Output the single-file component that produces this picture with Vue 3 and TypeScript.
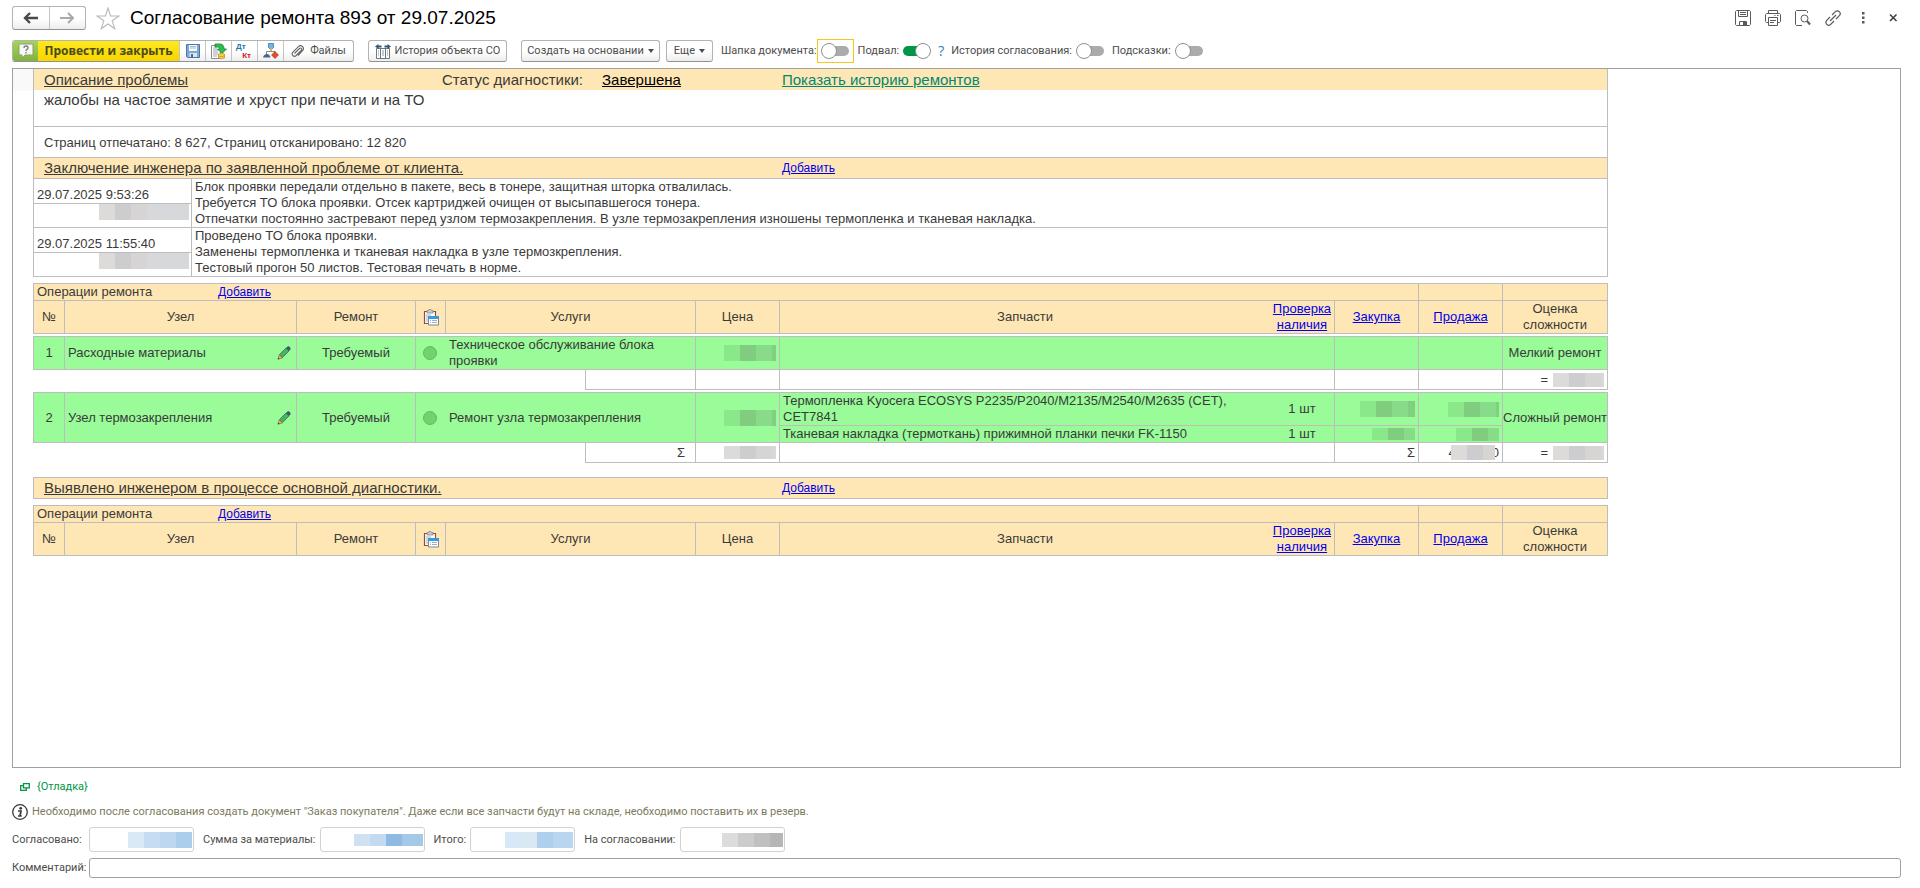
<script setup lang="ts">
import { ref } from 'vue'

interface Mask { width: number; height: number; tone: string }
interface Part { name: string; qty: string; buy: Mask | null; sale: Mask | null; tall: boolean }
interface Operation {
  no: number
  node: string
  repair: string
  service: string
  price: Mask
  parts: Part[]
  grade: string
  total: boolean
}
interface Block { id: string; operations: Operation[] }

const green = (width: number, height: number): Mask => ({ width, height, tone: 'mask-green' })
const gray = (width: number, height: number): Mask => ({ width, height, tone: 'mask-gray' })
const box = (m: Mask) => ({ width: m.width + 'px', height: m.height + 'px' })

const notes = [
  {
    date: '29.07.2025 9:53:26',
    lines: [
      'Блок проявки передали отдельно в пакете, весь в тонере, защитная шторка отвалилась.',
      'Требуется ТО блока проявки. Отсек картриджей очищен от высыпавшегося тонера.',
      'Отпечатки постоянно застревают перед узлом термозакрепления. В узле термозакрепления изношены термопленка и тканевая накладка.',
    ],
  },
  {
    date: '29.07.2025 11:55:40',
    lines: [
      'Проведено ТО блока проявки.',
      'Заменены термопленка и тканевая накладка в узле термозкрепления.',
      'Тестовый прогон 50 листов. Тестовая печать в норме.',
    ],
  },
]

const blocks: Block[] = [
  {
    id: 'declared',
    operations: [
      {
        no: 1,
        node: 'Расходные материалы',
        repair: 'Требуемый',
        service: 'Техническое обслуживание блока проявки',
        price: green(52, 16),
        parts: [{ name: '', qty: '', buy: null, sale: null, tall: true }],
        grade: 'Мелкий ремонт',
        total: false,
      },
      {
        no: 2,
        node: 'Узел термозакрепления',
        repair: 'Требуемый',
        service: 'Ремонт узла термозакрепления',
        price: green(52, 16),
        parts: [
          {
            name: 'Термопленка Kyocera ECOSYS P2235/P2040/M2135/M2540/M2635 (CET), CET7841',
            qty: '1 шт',
            buy: green(55, 16),
            sale: green(51, 15),
            tall: true,
          },
          {
            name: 'Тканевая накладка (термоткань) прижимной планки печки FK-1150',
            qty: '1 шт',
            buy: green(43, 12),
            sale: green(43, 13),
            tall: false,
          },
        ],
        grade: 'Сложный ремонт',
        total: true,
      },
    ],
  },
  { id: 'found', operations: [] },
]

const sums = [
  { id: 'agreed', label: 'Согласовано:', mask: { width: 64, height: 16, tone: 'mask-blue' } },
  { id: 'materials', label: 'Сумма за материалы:', mask: { width: 69, height: 12, tone: 'mask-deep' } },
  { id: 'total', label: 'Итого:', mask: { width: 68, height: 16, tone: 'mask-sky' } },
  { id: 'pending', label: 'На согласовании:', mask: { width: 61, height: 14, tone: 'mask-dark' } },
]

const showHeader = ref(false)
const showFooter = ref(true)
const showHistory = ref(false)
const showHints = ref(false)
const comment = ref('')
</script>

<template>
  <main class="page">
    <header class="titlebar">
      <div class="group nav">
        <button type="button" aria-label="Назад">
          <svg width="16" height="12" viewBox="0 0 16 12"><path d="M7 1 2 6l5 5M2 6h13" fill="none" stroke="#4a4a4a" stroke-width="2.4" /></svg>
        </button>
        <button type="button" aria-label="Вперед">
          <svg width="16" height="12" viewBox="0 0 16 12"><path d="M9 1l5 5-5 5M14 6H1" fill="none" stroke="#a8a8a8" stroke-width="2" /></svg>
        </button>
      </div>
      <button type="button" class="bare star" aria-label="В избранное">
        <svg width="24" height="23" viewBox="0 0 24 23"><path d="M12 1l2.500 8H23l-6.800 4.800 2.600 8L12 17l-6.800 4.800 2.600-8L1 9h8.500z" fill="#fff" stroke="#b4b9be" stroke-width="1.1" /></svg>
      </button>
      <h1>Согласование ремонта 893 от 29.07.2025</h1>
      <div class="window-tools">
        <button type="button" class="bare" aria-label="Сохранить">
          <svg width="16" height="16" viewBox="0 0 16 16" fill="none" stroke="#5a5a5a"><path d="M1.500.5h13l1 1v13l-1 1h-13l-1-1v-13z" /><path d="M3.500.5v6h9v-6M5 2.500h6M5 4.500h6M4.500 15.500v-4h7v4" /><path d="M8 12h3v3H8z" fill="#5a5a5a" stroke="none" /></svg>
        </button>
        <button type="button" class="bare" aria-label="Печать">
          <svg width="16" height="16" viewBox="0 0 16 16" fill="none" stroke="#5a5a5a"><path d="M3.500 3.500v-3h9v3M3 12.500H1.500l-1-1v-7l1-1h13l1 1v7l-1 1H13" /><path d="M3.500 7.500h9v8h-9zM5 10.500h6M5 12.500h4M9.500 5.500h1M12 5.500h1.500" /></svg>
        </button>
        <button type="button" class="bare" aria-label="Просмотр">
          <svg width="16" height="16" viewBox="0 0 16 16" fill="none" stroke="#5a5a5a"><path d="M12.500 3V1.500l-1-1h-10l-1 1v13l1 1H7" /><circle cx="9.500" cy="8.500" r="3.500" /><path d="M12 11l3 3.500" stroke-width="2" /></svg>
        </button>
        <button type="button" class="bare" aria-label="Ссылка">
          <svg width="16" height="16" viewBox="0 0 16 16" fill="none" stroke="#5a5a5a" stroke-width="1.200"><path d="M7 5l3.300-3.300a2.700 2.700 0 0 1 4 4L11 9M9 11l-3.300 3.300a2.700 2.700 0 0 1-4-4L5 7M5 11l6-6" /></svg>
        </button>
        <button type="button" class="bare" aria-label="Дополнительно">
          <svg width="16" height="16" viewBox="0 0 16 16" fill="#5a5a5a"><path d="M7 2h2.500v2.500H7zM7 6.500h2.500V9H7zM7 11h2.500v2.500H7z" /></svg>
        </button>
        <button type="button" class="bare" aria-label="Закрыть">
          <svg width="16" height="16" viewBox="0 0 16 16"><path d="M5 4.500l6.500 6.500M11.500 4.500L5 11" stroke="#3c3c3c" stroke-width="1.500" /></svg>
        </button>
      </div>
    </header>

    <div class="toolbar">
      <div class="group actions">
        <button type="button" class="help" aria-label="Справка">
          <svg width="16" height="16" viewBox="0 0 16 16"><path d="M2.500 1h11Q15 1 15 2.500v8q0 1.500-1.500 1.500H7l-3 3v-3H2.500Q1 12 1 10.500v-8Q1 1 2.500 1z" fill="#f6f8f2" stroke="#8c9c78" /><path d="M6 5q0-2 2-2t2 1.800q0 1-1 1.600T8 8M8 9v1.500" fill="none" stroke="#7b7b7b" stroke-width="1.300" /></svg>
        </button>
        <button type="button" class="primary">Провести и закрыть</button>
        <button type="button" class="icon" aria-label="Записать">
          <svg width="16" height="16" viewBox="0 0 16 16"><path d="M1.500 1.500h13v13h-12l-1-1z" fill="#7fa9d2" stroke="#4b76a5" /><path d="M4 2h8v6H4z" fill="#f5f9fc" /><path d="M5 3.500h6M5 5h6" stroke="#a8bccd" /><path d="M4.500 10h7.500v4H4.500z" fill="#dce7f1" /><path d="M6 11h2v3H6z" fill="#3f6c9c" /></svg>
        </button>
        <button type="button" class="icon" aria-label="Провести">
          <svg width="17" height="17" viewBox="0 0 17 17"><path d="M1.500 2.500h9v13h-9z" fill="#fff" stroke="#8b8b8b" /><path d="M3 5h4M3 7h5M3 9h5M3 11h5M3 13h4" stroke="#9aa6b2" /><path d="M5 1h5q4 0 4 5h2.500L12 10.500 7.500 6H10q0-2-2-2H5z" fill="#2fbf4f" stroke="#158034" stroke-width=".8" /><path d="M8.500 11q3-1.500 6 0v4q-3 1.500-6 0z" fill="#f5cf55" stroke="#c9962a" stroke-width=".8" /><path d="M8.500 13q3 1.500 6 0" fill="none" stroke="#c9962a" stroke-width=".8" /></svg>
        </button>
        <button type="button" class="icon dtkt" aria-label="Проводки"><span class="dt">Дт</span><span class="kt">Кт</span></button>
        <button type="button" class="icon" aria-label="Структура">
          <svg width="16" height="16" viewBox="0 0 16 16"><path d="M8 6v3M3.500 11V8.500h8.500V11" fill="none" stroke="#888" /><path d="M5.500.5h5v4L8 7 5.500 4.500z" fill="#70b4e8" stroke="#3e77a8" stroke-width=".8" /><path d="M6.500 5.500h3L8 8z" fill="#f0b94a" /><path d="M0 14.500q.5-3 3.500-3.500t4 3.500z" fill="#44678f" /><path d="M12 8.500l3.500 3.500-3.500 3.500L8.500 12z" fill="#dd4c2c" stroke="#a93218" stroke-width=".6" /></svg>
        </button>
        <button type="button" class="files">
          <svg width="14" height="14" viewBox="0 0 14 14"><path d="M3.500 9.500l5-5q1.300-1 2 0t-.3 2l-5 5q-1.600 1.500-3.200.2t-.3-3.300l5.700-5.700q2-1.900 4-.2t.3 4L7 11.500" fill="none" stroke="#666" stroke-width="1.100" /></svg>
          Файлы
        </button>
      </div>
      <button type="button" class="btn history">
        <svg width="16" height="15" viewBox="0 0 16 15"><path d="M1.500 4.500h13v10h-13z" fill="#fff" stroke="#6c7780" /><path d="M5.500 5v9M10.500 5v9" stroke="#6c7780" /><path d="M3 7h1M3 9h1M3 11h1M7 7h2M7 9h2M7 11h2M12 7h1M12 9h1M12 11h1" stroke="#8c9aa4" /><path d="M0 2.500L3.500 0v1.500h3v2h-3V5zM16 2.500L12.500 0v1.500h-3v2h3V5z" fill="#33566e" /></svg>
        История объекта СО
      </button>
      <button type="button" class="btn create">Создать на основании<i class="caret"></i></button>
      <button type="button" class="btn more">Еще<i class="caret"></i></button>

      <div class="switches">
        <label for="sw-header">Шапка документа:</label>
        <span class="focus"><input id="sw-header" v-model="showHeader" type="checkbox" class="switch" /></span>
        <label for="sw-footer" class="after-focus">Подвал:</label>
        <input id="sw-footer" v-model="showFooter" type="checkbox" class="switch" />
        <button type="button" class="bare question">?</button>
        <label for="sw-history">История согласования:</label>
        <input id="sw-history" v-model="showHistory" type="checkbox" class="switch" />
        <label for="sw-hints" class="after-switch">Подсказки:</label>
        <input id="sw-hints" v-model="showHints" type="checkbox" class="switch" />
      </div>
    </div>

    <section class="panel">
      <div class="gutter"></div>
      <div class="sheet">
        <div class="band first">
          <h2>Описание проблемы</h2>
          <span class="status">Статус диагностики:</span>
          <a href="#" class="done">Завершена</a>
          <a href="#" class="repairs">Показать историю ремонтов</a>
        </div>
        <p class="problem">жалобы на частое замятие и хруст при печати и на ТО</p>
        <p class="pages">Страниц отпечатано: 8 627, Страниц отсканировано: 12 820</p>
        <div class="band closing">
          <h2>Заключение инженера по заявленной проблеме от клиента.</h2>
          <a href="#" class="add">Добавить</a>
        </div>
        <div v-for="note in notes" :key="note.date" class="note">
          <div class="who">
            <time>{{ note.date }}</time>
            <div class="author"><span class="mask mask-gray author-mask"></span></div>
          </div>
          <div class="text"><p v-for="line in note.lines" :key="line">{{ line }}</p></div>
        </div>

        <template v-for="(block, index) in blocks" :key="block.id">
          <div v-if="index === 1" class="band separate">
            <h2>Выявлено инженером в процессе основной диагностики.</h2>
            <a href="#" class="add">Добавить</a>
          </div>
          <table class="ops">
            <colgroup>
              <col class="c-no" /><col class="c-node" /><col class="c-repair" /><col class="c-flag" />
              <col class="c-serv" /><col class="c-sum" /><col class="c-money" /><col />
              <col class="c-check" /><col class="c-money" /><col class="c-money" /><col class="c-grade" />
            </colgroup>
            <thead>
              <tr class="caption">
                <td colspan="10" class="lead top">
                  <div class="caption-row"><span>Операции ремонта</span><a href="#" class="add">Добавить</a></div>
                </td>
                <td class="top"></td>
                <td class="top"></td>
              </tr>
              <tr class="heads">
                <th class="lead">№</th>
                <th>Узел</th>
                <th>Ремонт</th>
                <th>
                  <svg width="16" height="17" viewBox="0 0 16 17"><path d="M1.500 2.500h11v12h-11z" fill="#fff" stroke="#9a4a35" stroke-width="1.200" /><path d="M4 1.500h1.500L6 .5h2l.5 1H10V4H4z" fill="#c6cbd0" stroke="#808890" stroke-width=".8" /><path d="M3 6h5M3 8h3M3 10h2M3 12h2" stroke="#a8afb6" /><path d="M5.500 7.500h10v8.500h-10z" fill="#fff" stroke="#7a8794" /><path d="M5 7h11v3H5z" fill="#3a9ae0" /><path d="M7 11.500h1M9 11.500h5M7 13.500h1M9 13.500h5" stroke="#9fb0bf" /></svg>
                </th>
                <th colspan="2">Услуги</th>
                <th>Цена</th>
                <th class="open">Запчасти</th>
                <th><a href="#">Проверка наличия</a></th>
                <th><a href="#">Закупка</a></th>
                <th><a href="#">Продажа</a></th>
                <th>Оценка сложности</th>
              </tr>
            </thead>
            <tbody v-for="op in block.operations" :key="op.no">
              <tr class="spacer"><td colspan="12"></td></tr>
              <tr v-for="(part, i) in op.parts" :key="i" class="work" :class="part.tall ? 'tall' : 'short'">
                <template v-if="i === 0">
                  <td :rowspan="op.parts.length" class="lead center">{{ op.no }}</td>
                  <td :rowspan="op.parts.length">
                    <div class="node">
                      <span>{{ op.node }}</span>
                      <button type="button" class="bare" aria-label="Изменить">
                        <svg width="14" height="14" viewBox="0 0 14 14"><path d="M1 13l1.300-4.300L5.500 12z" fill="#f2b45c" stroke="#8d6a3a" stroke-width=".7" /><path d="M.7 13.500l.6-2 1.400 1.400z" fill="#444" /><path d="M2.500 8.500L9 2l3 3-6.500 6.500z" fill="#49b067" stroke="#35784a" stroke-width=".8" /><path d="M9 2l1.500-1.500q1.500-.5 2.300.5t.6 2.300L12 5z" fill="#3f5669" /></svg>
                      </button>
                    </div>
                  </td>
                  <td :rowspan="op.parts.length" class="center">{{ op.repair }}</td>
                  <td :rowspan="op.parts.length" class="open flag"><i class="dot"></i></td>
                  <td :rowspan="op.parts.length" colspan="2">{{ op.service }}</td>
                  <td :rowspan="op.parts.length" class="right"><span class="mask" :class="op.price.tone" :style="box(op.price)"></span></td>
                </template>
                <td class="open">{{ part.name }}</td>
                <td class="center">{{ part.qty }}</td>
                <td class="right"><span v-if="part.buy" class="mask" :class="part.buy.tone" :style="box(part.buy)"></span></td>
                <td class="right"><span v-if="part.sale" class="mask" :class="part.sale.tone" :style="box(part.sale)"></span></td>
                <td v-if="i === 0" :rowspan="op.parts.length" class="center grade">{{ op.grade }}</td>
              </tr>
              <tr class="sum">
                <td colspan="5" class="blank"></td>
                <td class="right sigma">{{ op.total ? 'Σ' : '' }}</td>
                <td class="right"><span v-if="op.total" class="mask" :class="gray(52, 13).tone" :style="box(gray(52, 13))"></span></td>
                <td class="open"></td>
                <td></td>
                <td class="right">{{ op.total ? 'Σ' : '' }}</td>
                <td class="right"><span v-if="op.total" class="covered">4<span class="mask mask-gray cover"></span>0</span></td>
                <td class="right"><span class="equals">=<span class="mask" :class="gray(51, 14).tone" :style="box(gray(51, 14))"></span></span></td>
              </tr>
            </tbody>
          </table>
        </template>
      </div>
    </section>

    <footer>
      <a href="#" class="debug">
        <svg width="10" height="8" viewBox="0 0 10 8"><path d="M3.500.7h5.800v4.100H3.500zM3 2.700H.7v4.600h5.600V5" fill="none" stroke="#009646" stroke-width="1.300" /></svg>
        {Отладка}
      </a>
      <div class="info">
        <svg width="16" height="16" viewBox="0 0 16 16"><circle cx="8" cy="8" r="7.300" fill="#fff" stroke="#3a3a3a" stroke-width="1.300" /><circle cx="8.700" cy="4.300" r="1.400" fill="#3a3a3a" /><path d="M6 7h3L8 12h1.700M6 12h1.500" fill="none" stroke="#3a3a3a" stroke-width="1.700" /></svg>
        <span>Необходимо после согласования создать документ "Заказ покупателя". Даже если все запчасти будут на складе, необходимо поставить их в резерв.</span>
      </div>
      <div class="sums">
        <div v-for="s in sums" :key="s.id" class="field">
          <label :for="s.id">{{ s.label }}</label>
          <span class="value">
            <input :id="s.id" type="text" readonly />
            <span class="mask over" :class="s.mask.tone" :style="box(s.mask)"></span>
          </span>
        </div>
      </div>
      <div class="comment">
        <label for="comment">Комментарий:</label>
        <input id="comment" v-model="comment" type="text" />
      </div>
    </footer>
  </main>
</template>

<style>
body {
  margin: 0;
  background: #fff;
}
</style>

<style scoped>
.page {
  display: flex;
  flex-direction: column;
  box-sizing: border-box;
  min-height: 100vh;
  padding: 6px 19px 10px 12px;
  font: 11px/16px Roboto, "Liberation Sans", sans-serif;
  color: #4d4d4d;
}
button,
input {
  box-sizing: border-box;
  margin: 0;
  font: inherit;
  color: inherit;
}
button {
  padding: 0;
  white-space: nowrap;
}
label {
  white-space: nowrap;
}
svg {
  display: block;
  flex: none;
}
.bare {
  display: flex;
  align-items: center;
  justify-content: center;
  border: 0;
  background: none;
}
.titlebar {
  display: flex;
  align-items: center;
  height: 24px;
}
.group {
  display: flex;
  box-sizing: border-box;
  border: 1px solid #b3b3b3;
  border-bottom-color: #929292;
  border-radius: 3px;
  overflow: hidden;
  background: linear-gradient(#fff, #fff 50%, #eee);
}
.group button {
  display: flex;
  align-items: center;
  justify-content: center;
  border: 0;
  border-left: 1px solid #c4c4c4;
  background: none;
}
.group button:first-child {
  border-left: 0;
}
.nav {
  width: 74px;
  height: 24px;
}
.nav button {
  flex: 1;
}
.star {
  margin: 0 10px 0 10px;
}
h1 {
  margin: 0;
  font: 19px/24px "Liberation Sans", sans-serif;
  color: #000;
}
.window-tools {
  display: flex;
  gap: 14px;
  margin-left: auto;
}
.toolbar {
  display: flex;
  align-items: center;
  height: 24px;
  margin-top: 9px;
}
.actions,
.btn {
  height: 22px;
}
.group .help {
  width: 25px;
  background: linear-gradient(#a9d35b, #7fb43a);
}
.group .primary {
  width: 141px;
  border-left: 0;
  background: linear-gradient(#ffe81f, #f7d500);
  font: 700 12px/16px "Open Sans", sans-serif;
  color: #4a4a1a;
}
.group .icon {
  width: 26px;
}
.group .files {
  width: 70px;
  gap: 5px;
}
.group .dtkt {
  flex-direction: column;
  align-items: stretch;
  font: 700 8px/9px "Liberation Sans", sans-serif;
}
.dt {
  padding-left: 4px;
  text-align: left;
  color: #2478a8;
}
.kt {
  padding-right: 6px;
  text-align: right;
  color: #c8202c;
}
.btn {
  display: flex;
  align-items: center;
  justify-content: center;
  gap: 4px;
  border: 1px solid #b3b3b3;
  border-bottom-color: #929292;
  border-radius: 3px;
  background: linear-gradient(#fff, #fff 50%, #eee);
}
.history {
  width: 139px;
  margin-left: 14px;
}
.create {
  width: 139px;
  margin-left: 14px;
}
.more {
  width: 47px;
  margin-left: 6px;
}
.caret {
  border: 3px solid transparent;
  border-top: 4px solid #4d4d4d;
  border-bottom: 0;
}
.switches {
  display: flex;
  align-items: center;
  margin-left: 8px;
}
.focus {
  display: flex;
  box-sizing: border-box;
  width: 37px;
  height: 24px;
  align-items: center;
  justify-content: center;
  border: 1px solid #f4c918;
}
.after-focus {
  margin-left: 4px;
}
.switch {
  position: relative;
  flex: none;
  width: 28px;
  height: 16px;
  margin-left: 4px;
  appearance: none;
}
.focus .switch {
  margin: 0;
}
.switch::before {
  content: "";
  position: absolute;
  inset: 3px 0 3px 4px;
  border-radius: 5px;
  background: #ababab;
}
.switch::after {
  content: "";
  position: absolute;
  top: 0;
  left: 0;
  box-sizing: border-box;
  width: 16px;
  height: 16px;
  border: 1px solid #8f8f8f;
  border-radius: 50%;
  background: #fff;
}
.switch:checked::before {
  inset: 3px 4px 3px 0;
  background: #009646;
}
.switch:checked::after {
  left: 12px;
}
.question {
  width: 20px;
  font: 14px/16px "Open Sans", sans-serif;
  color: #1a83c4;
}
.after-switch {
  margin-left: 8px;
}
.panel {
  display: flex;
  flex: 1;
  margin-top: 5px;
  border: 1px solid #a0a0a0;
}
.gutter {
  width: 20px;
  height: 22px;
  background: #f9f9f9;
}
.sheet {
  flex: 1;
  max-width: 1575px;
  font: 13px/16px "Liberation Sans", sans-serif;
  color: #3a3a3a;
}
.sheet p {
  margin: 0;
}
.sheet a {
  color: #0000ee;
}
h2 {
  margin: 0;
  font: 15px/20px "Liberation Sans", sans-serif;
  text-decoration: underline;
}
.band {
  display: grid;
  grid-template-columns: 398px 160px 180px 1fr;
  align-items: center;
  box-sizing: border-box;
  padding-left: 10px;
  border: 1px solid #bdbdbd;
  background: #ffe7b5;
}
.band.first {
  height: 21px;
  border-width: 0 1px;
  font-size: 15px;
  line-height: 20px;
}
.band.first .done {
  color: #000;
}
.band.first .repairs {
  color: #008873;
}
.band.closing {
  height: 21px;
  border-top: 0;
}
.band:not(.first) {
  grid-template-columns: 738px 1fr;
}
.band.separate {
  height: 22px;
  margin-top: 14px;
}
.sheet .add {
  font-size: 12px;
}
.problem,
.pages {
  box-sizing: border-box;
  padding-left: 10px;
  border: 1px solid #bdbdbd;
  border-top: 0;
}
.sheet .problem {
  height: 37px;
  font-size: 15px;
  line-height: 20px;
}
.sheet .pages {
  height: 31px;
  line-height: 32px;
}
.note {
  display: grid;
  grid-template-columns: 158px 1fr;
  border: 1px solid #bdbdbd;
  border-top: 0;
}
.who {
  border-right: 1px solid #bdbdbd;
}
.who time {
  display: block;
  height: 24px;
  padding: 8px 0 0 3px;
  box-sizing: border-box;
}
.author {
  display: flex;
  justify-content: flex-end;
  padding-right: 2px;
  border-top: 1px solid #bdbdbd;
}
.author-mask {
  width: 90px;
  height: 16px;
}
.text {
  padding-left: 3px;
}
.mask {
  display: inline-block;
  vertical-align: middle;
  background: linear-gradient(90deg, var(--a) 0 16px, var(--b) 16px 32px, var(--c) 32px 48px, var(--d) 48px);
}
.mask-green {
  --a: #8ae88a;
  --b: #80cd80;
  --c: #88db88;
  --d: #80d080;
}
.mask-gray {
  --a: #dcdbda;
  --b: #cdcccf;
  --c: #d6d5d4;
  --d: #d7d8dc;
}
.mask-blue {
  --a: #dae9f6;
  --b: #c6dcf2;
  --c: #bcd7ef;
  --d: #aaceeb;
}
.mask-deep {
  --a: #cfe1f3;
  --b: #c3daf0;
  --c: #8fbbe2;
  --d: #a3c8e8;
}
.mask-sky {
  --a: #d8e8f6;
  --b: #dae8f4;
  --c: #aed0ed;
  --d: #b8d6ef;
}
.mask-dark {
  --a: #dcdcdc;
  --b: #cccccc;
  --c: #c0c0c0;
  --d: #b6b6b6;
}
.ops {
  width: 100%;
  margin-top: 6px;
  border-spacing: 0;
  table-layout: fixed;
}
.c-no {
  width: 32px;
}
.c-node {
  width: 232px;
}
.c-repair {
  width: 119px;
}
.c-flag {
  width: 30px;
}
.c-serv {
  width: 140px;
}
.c-sum {
  width: 110px;
}
.c-money {
  width: 84px;
}
.c-check {
  width: 65px;
}
.c-grade {
  width: 105px;
}
.ops td,
.ops th {
  box-sizing: border-box;
  padding: 0 3px;
  border: 0 solid #bdbdbd;
  border-width: 0 1px 1px 0;
  font-weight: 400;
  text-align: left;
  vertical-align: middle;
}
.ops thead th {
  padding: 0;
  text-align: center;
}
.ops thead svg {
  margin: 0 auto;
}
.ops .lead {
  border-left-width: 1px;
}
.ops .top {
  border-top-width: 1px;
}
.ops .open {
  border-right-width: 0;
}
.ops .center {
  padding: 0;
  text-align: center;
}
.ops .grade {
  white-space: nowrap;
}
.ops .right {
  text-align: right;
  line-height: 12px;
}
.ops thead td,
.ops thead th {
  background: #ffe7b5;
}
.caption {
  height: 18px;
}
.caption-row {
  display: grid;
  grid-template-columns: 181px 1fr;
}
.heads {
  height: 33px;
}
.ops .spacer td {
  height: 3px;
  padding: 0;
  border-right: 0;
}
.work td {
  background: #99fc99;
}
.tall {
  height: 33px;
}
.short {
  height: 17px;
}
.sum {
  height: 20px;
}
.ops .sum .blank {
  border-bottom: 0;
}
.ops .sum .sigma {
  padding-right: 10px;
}
.node {
  display: flex;
  align-items: center;
  justify-content: space-between;
  padding-right: 2px;
}
.ops .flag {
  padding-left: 7px;
}
.dot {
  display: block;
  box-sizing: border-box;
  width: 14px;
  height: 14px;
  border: 1px solid #62bb62;
  border-radius: 50%;
  background: #72d26c;
}
.covered,
.equals {
  display: flex;
  align-items: center;
  justify-content: flex-end;
}
.equals {
  gap: 5px;
}
.covered .cover {
  position: relative;
  width: 44px;
  height: 15px;
  margin: 0 -3px 0 -5px;
}
footer {
  display: flex;
  flex-direction: column;
}
.debug {
  display: flex;
  align-items: center;
  gap: 7px;
  margin: 11px 0 0 8px;
  color: #009646;
  text-decoration: none;
}
.info {
  display: flex;
  align-items: center;
  gap: 4px;
  margin-top: 9px;
  color: #7c7a5c;
}
.sums {
  display: flex;
  gap: 9px;
  margin-top: 7px;
}
.field,
.comment {
  display: flex;
  align-items: center;
  gap: 4px;
}
.field:first-child label,
.comment label {
  width: 73px;
}
.value {
  display: flex;
  position: relative;
}
.value input {
  width: 105px;
  height: 25px;
  border: 1px solid #d2d2d2;
  border-radius: 3px;
}
.over {
  position: absolute;
  top: 0;
  right: 2px;
  bottom: 0;
  margin: auto 0;
}
.comment {
  margin-top: 6px;
}
.comment input {
  flex: 1;
  height: 20px;
  border: 1px solid #a0a0a0;
  border-radius: 3px;
}
</style>
